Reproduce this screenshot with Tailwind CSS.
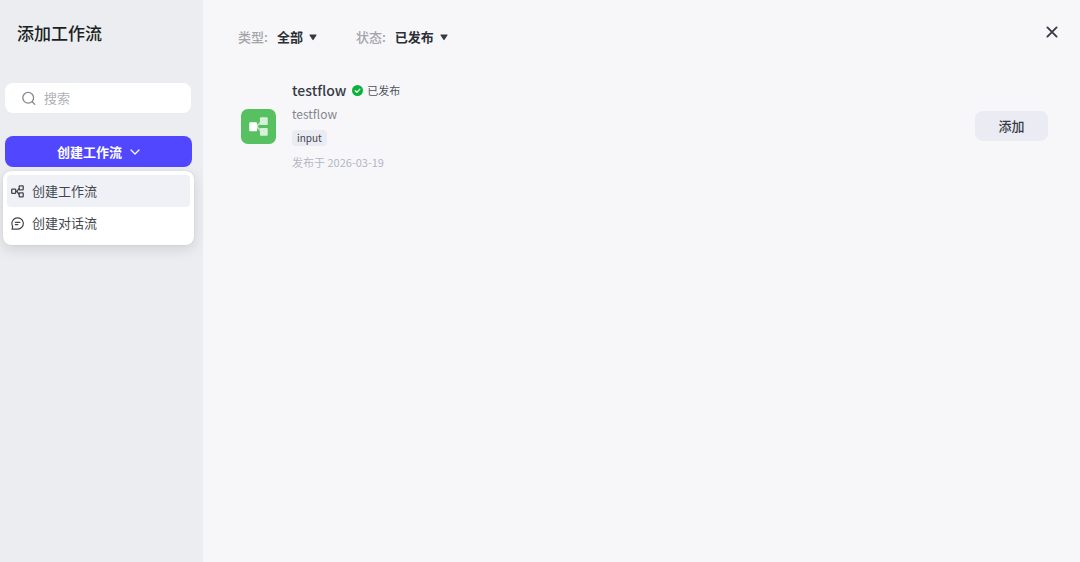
<!DOCTYPE html>
<html lang="zh-CN">
<head>
    <meta charset="UTF-8">
    <meta name="viewport" content="width=device-width, initial-scale=1.0">
    <title>添加工作流</title>
    <script src="https://cdn.jsdelivr.net/npm/@tailwindcss/browser@4"></script>
</head>
<body class="flex min-h-screen bg-[#f7f7fa] font-['Noto_Sans_CJK_SC',sans-serif] text-[13px] leading-5 text-[#383b47]">
    <!-- Sidebar -->
    <aside class="w-[203px] shrink-0 bg-[#ebedf0] px-[5px] pt-[21px]">
        <h1 class="px-3 text-[17px] leading-6 font-medium text-[#1c1f23]">添加工作流</h1>

        <label class="mt-[38px] flex h-[30px] w-[186px] items-center gap-2 rounded-lg bg-white px-4">
            <svg class="size-[15px] shrink-0 text-[#85878c]" viewBox="0 0 15 15" fill="none" stroke="currentColor" stroke-width="1.3" stroke-linecap="round">
                <circle cx="7.2" cy="6.8" r="5.4"/>
                <path d="M11.2 10.8l2.6 2.6"/>
            </svg>
            <input type="text" placeholder="搜索" aria-label="搜索" class="w-full min-w-0 outline-none placeholder:text-[#b0b2b6]">
        </label>

        <div class="relative mt-[23px] w-[187px]">
            <button type="button" aria-expanded="true" class="flex h-[31px] w-full items-center justify-center gap-2 rounded-lg bg-[#5147ff] font-bold text-white">
                创建工作流
                <svg class="h-[6px] w-[10px]" viewBox="0 0 10 6" fill="none" stroke="currentColor" stroke-width="1.2" stroke-linecap="round" stroke-linejoin="round">
                    <path d="M1 1l4 4 4-4"/>
                </svg>
            </button>
            <!-- Dropdown menu -->
            <div role="menu" class="absolute top-[35px] -left-0.5 w-[191px] rounded-lg bg-white p-1 pb-1.5 shadow-[0_4px_14px_rgba(0,0,0,0.12),0_0_1px_rgba(0,0,0,0.2)]">
                <button type="button" role="menuitem" class="flex h-8 w-full items-center gap-2 rounded bg-[#f0f1f7] px-1 text-[#42464e]">
                    <svg class="size-[13px]" viewBox="0 0 13 13" fill="none" stroke="currentColor" stroke-width="1.3" stroke-linejoin="round">
                        <rect x="0.7" y="4.2" width="4" height="4.2" rx="0.6"/>
                        <rect x="8.2" y="0.9" width="4" height="4" rx="0.6"/>
                        <rect x="8.2" y="7.9" width="4" height="4" rx="0.6"/>
                        <path d="M4.7 6.3h1.2l2.3-3M5.9 6.3l2.3 3.2"/>
                    </svg>
                    创建工作流
                </button>
                <button type="button" role="menuitem" class="flex h-8 w-full items-center gap-2 rounded px-1 text-[#42464e]">
                    <svg class="size-[13px]" viewBox="0 0 13 13" fill="none" stroke="currentColor" stroke-width="1.2" stroke-linecap="round" stroke-linejoin="round">
                        <path d="M1.7 9.4A5.7 5.7 0 1 1 6.6 12.2H1.1z"/>
                        <path d="M4.3 5.3h4.6M4.3 7.6h2.6"/>
                    </svg>
                    创建对话流
                </button>
            </div>
        </div>
    </aside>

    <!-- Main content -->
    <main class="min-w-0 flex-1 pt-5 pr-4 pl-[35px]">
        <header class="flex items-start justify-between">
            <div class="flex items-center gap-[39px] pt-[7px]">
                <div class="flex items-center gap-[9px]">
                    <label for="type" class="font-medium text-[#a3a4a8]">类型:</label>
                    <div class="flex items-center">
                        <select id="type" class="field-sizing-content appearance-none pr-3.5 font-bold text-[#2c2e35]">
                            <option>全部</option>
                        </select>
                        <svg class="pointer-events-none -ml-2 size-2 text-[#383a42]" viewBox="0 0 8 8" fill="currentColor">
                            <path d="M0.9 1.4h6.2a.5.5 0 0 1 .4.8L4.5 6.8a.6.6 0 0 1-1 0L.5 2.2A.5.5 0 0 1 .9 1.4z"/>
                        </svg>
                    </div>
                </div>
                <div class="flex items-center gap-[9px]">
                    <label for="status" class="font-medium text-[#a3a4a8]">状态:</label>
                    <div class="flex items-center">
                        <select id="status" class="field-sizing-content appearance-none pr-3.5 font-bold text-[#2c2e35]">
                            <option>已发布</option>
                        </select>
                        <svg class="pointer-events-none -ml-2 size-2 text-[#383a42]" viewBox="0 0 8 8" fill="currentColor">
                            <path d="M0.9 1.4h6.2a.5.5 0 0 1 .4.8L4.5 6.8a.6.6 0 0 1-1 0L.5 2.2A.5.5 0 0 1 .9 1.4z"/>
                        </svg>
                    </div>
                </div>
            </div>
            <button type="button" aria-label="关闭" class="flex size-6 items-center justify-center text-[#383b47]">
                <svg class="size-3" viewBox="0 0 12 12" fill="none" stroke="currentColor" stroke-width="1.9" stroke-linecap="round">
                    <path d="M1.4 1.4l9.2 9.2M10.6 1.4l-9.2 9.2"/>
                </svg>
            </button>
        </header>

        <article class="mt-[33px] flex items-center pr-4 pl-[3px]">
            <svg class="size-[35px] shrink-0" viewBox="0 0 36 36">
                <rect width="36" height="36" rx="7" fill="#57c162"/>
                <path d="M16 18l5-5M16 18l5 5" stroke="#c5ebc8" stroke-width="1.6"/>
                <rect x="8.5" y="13.5" width="8" height="9.5" rx="1" fill="#fff"/>
                <rect x="19.5" y="8.5" width="8" height="8" rx="1" fill="#d5f1d7"/>
                <rect x="19.5" y="19.5" width="8" height="8" rx="1" fill="#d5f1d7"/>
            </svg>
            <div class="ml-4 flex min-w-0 flex-1 flex-col items-start">
                <div class="flex items-center gap-1.5">
                    <h2 class="text-sm leading-5 font-medium">testflow</h2>
                    <span class="flex items-center gap-1 text-[11px] text-[#4f525c]">
                        <svg class="size-[11px]" viewBox="0 0 11 11" fill="none">
                            <circle cx="5.5" cy="5.5" r="5.5" fill="#0bb13c"/>
                            <path d="M3.2 5.6l1.7 1.7 3-3.2" stroke="#fff" stroke-width="1.2" stroke-linecap="round" stroke-linejoin="round"/>
                        </svg>
                        已发布
                    </span>
                </div>
                <p class="mt-1 text-xs leading-5 text-[#85878f]">testflow</p>
                <span class="mt-1.5 rounded bg-[#eaebf3] px-[5px] text-[10px] leading-4 text-[#42464e]">input</span>
                <p class="mt-1.5 text-[11px] leading-5 text-[#b4b6c6]">发布于 2026-03-19</p>
            </div>
            <button type="button" class="h-[30px] w-[73px] shrink-0 rounded-lg bg-[#eaebf3] font-medium">添加</button>
        </article>
    </main>
</body>
</html>
